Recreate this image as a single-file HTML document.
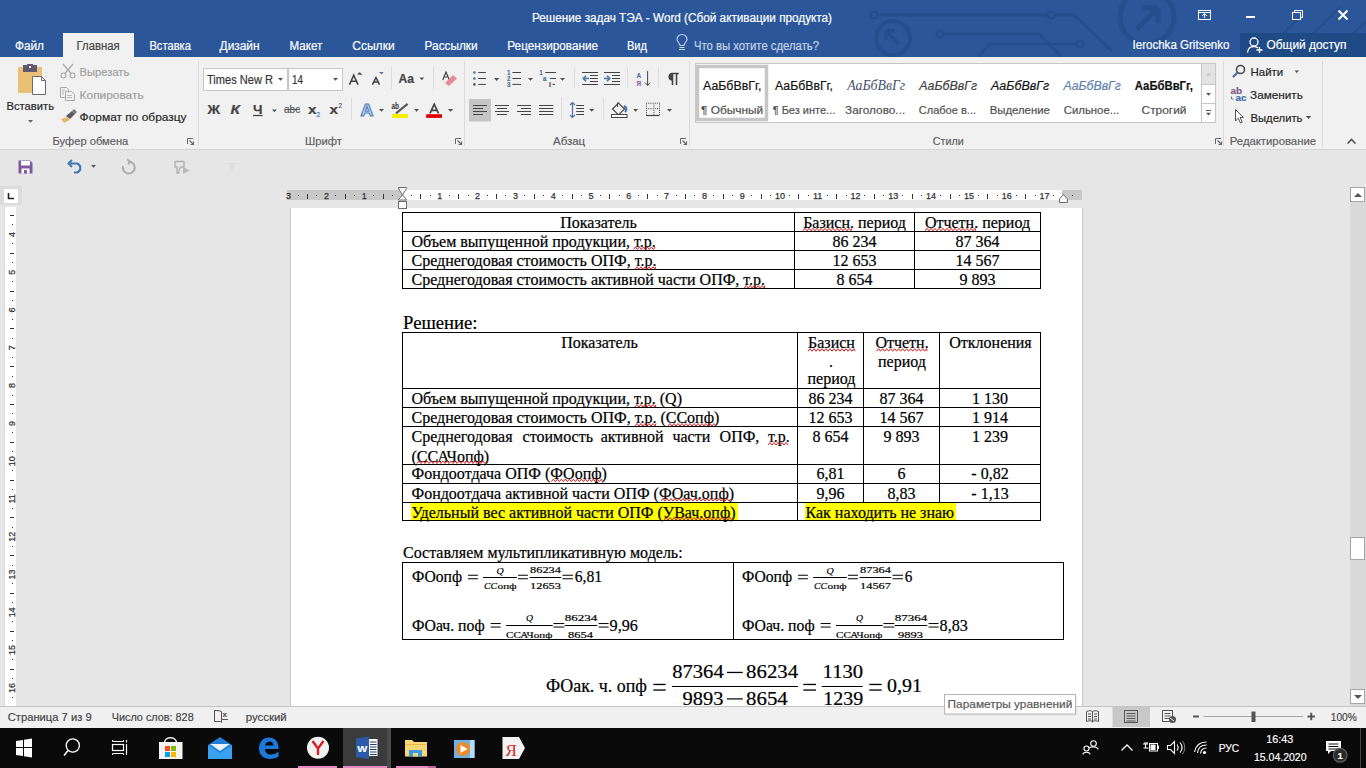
<!DOCTYPE html>
<html><head><meta charset="utf-8"><title>Word</title><style>html,body{margin:0;padding:0;width:1366px;height:768px;overflow:hidden;background:#e6e6e6}text{white-space:pre}</style></head><body><svg width="1366" height="768" viewBox="0 0 1366 768" style="position:absolute;left:0;top:0"><rect x="0" y="0" width="1366" height="57" fill="#2b579a" />
<clipPath id="tc"><rect x="0" y="0" width="1366" height="57"/></clipPath>
<g stroke="#244f8e" stroke-width="3" fill="none" clip-path="url(#tc)">
<path d="M874 15 H1051 L1074 15 L1112 51" fill="none" stroke="#244f8e" stroke-width="3" />
<circle cx="874" cy="15" r="3.5" fill="#2b579a" stroke="#244f8e" stroke-width="2.5" />
<circle cx="1051" cy="15" r="3.5" fill="#2b579a" stroke="#244f8e" stroke-width="2.5" />
<path d="M940 34 H1039 L1062 57" fill="none" stroke="#244f8e" stroke-width="3" />
<circle cx="940" cy="34" r="3.5" fill="#2b579a" stroke="#244f8e" stroke-width="2.5" />
<path d="M978 57 L990 44 H1076" fill="none" stroke="#244f8e" stroke-width="3" />
<circle cx="1080" cy="44" r="3.5" fill="#2b579a" stroke="#244f8e" stroke-width="2.5" />
<circle cx="893" cy="38" r="17" fill="none" stroke="#244f8e" stroke-width="4" />
<path d="M886 31 L899 44 M886 31 V40 M886 31 H895" fill="none" stroke="#244f8e" stroke-width="4" />
<circle cx="1147" cy="17" r="27" fill="none" stroke="#244f8e" stroke-width="5" />
<path d="M1137 29 L1158 8 M1158 8 H1143 M1158 8 V23" fill="none" stroke="#244f8e" stroke-width="5" />
<path d="M1260 57 L1300 17 M1290 57 L1340 7 M1330 57 L1366 21" fill="none" stroke="#244f8e" stroke-width="2" />
</g>
<text x="532" y="21.5" font-family="Liberation Sans" font-size="12" fill="#fff" textLength="300" lengthAdjust="spacingAndGlyphs"  stroke="#fff" stroke-width="0.18">Решение задач ТЭА - Word (Сбой активации продукта)</text>
<rect x="1198.5" y="10.5" width="12" height="9" fill="none" stroke="#fff" stroke-width="1" />
<line x1="1198" y1="12.5" x2="1211" y2="12.5" stroke="#fff" stroke-width="1" />
<path d="M1204.5 18 V14 M1202 16 L1204.5 13.5 L1207 16" fill="none" stroke="#fff" stroke-width="1" />
<line x1="1246" y1="17" x2="1255" y2="17" stroke="#fff" stroke-width="2" />
<rect x="1292.5" y="12.5" width="8" height="7" fill="none" stroke="#fff" stroke-width="1" />
<path d="M1294.5 12.5 V10.5 H1302.5 V17.5 H1300.5" fill="none" stroke="#fff" stroke-width="1" />
<path d="M1338.5 10.5 L1347.5 19.5 M1347.5 10.5 L1338.5 19.5" fill="none" stroke="#fff" stroke-width="2" />
<rect x="63" y="33" width="71" height="24" fill="#f1f1f1" />
<text x="15" y="49.5" font-family="Liberation Sans" font-size="12" fill="#fff" textLength="29" lengthAdjust="spacingAndGlyphs"  stroke="#fff" stroke-width="0.18">Файл</text>
<text x="76.5" y="49.5" font-family="Liberation Sans" font-size="12" fill="#444" textLength="43.2" lengthAdjust="spacingAndGlyphs"  stroke="#444" stroke-width="0.18">Главная</text>
<text x="149.4" y="49.5" font-family="Liberation Sans" font-size="12" fill="#fff" textLength="41.6" lengthAdjust="spacingAndGlyphs"  stroke="#fff" stroke-width="0.18">Вставка</text>
<text x="219.6" y="49.5" font-family="Liberation Sans" font-size="12" fill="#fff" textLength="40.0" lengthAdjust="spacingAndGlyphs"  stroke="#fff" stroke-width="0.18">Дизайн</text>
<text x="289.5" y="49.5" font-family="Liberation Sans" font-size="12" fill="#fff" textLength="32.8" lengthAdjust="spacingAndGlyphs"  stroke="#fff" stroke-width="0.18">Макет</text>
<text x="352.3" y="49.5" font-family="Liberation Sans" font-size="12" fill="#fff" textLength="42.3" lengthAdjust="spacingAndGlyphs"  stroke="#fff" stroke-width="0.18">Ссылки</text>
<text x="424.6" y="49.5" font-family="Liberation Sans" font-size="12" fill="#fff" textLength="53.0" lengthAdjust="spacingAndGlyphs"  stroke="#fff" stroke-width="0.18">Рассылки</text>
<text x="507.3" y="49.5" font-family="Liberation Sans" font-size="12" fill="#fff" textLength="90.7" lengthAdjust="spacingAndGlyphs"  stroke="#fff" stroke-width="0.18">Рецензирование</text>
<text x="627" y="49.5" font-family="Liberation Sans" font-size="12" fill="#fff" textLength="20" lengthAdjust="spacingAndGlyphs"  stroke="#fff" stroke-width="0.18">Вид</text>
<path d="M679 49.5 H685 M679.5 47.5 H684.5 M680 45.5 C 680 43, 677 42, 677 39.5 A 5 5 0 0 1 687 39.5 C 687 42, 684 43, 684 45.5 Z" fill="none" stroke="#c8d6ec" stroke-width="1.1" />
<text x="694" y="49.5" font-family="Liberation Sans" font-size="12" fill="#c5d2e6" textLength="125" lengthAdjust="spacingAndGlyphs"  stroke="#c5d2e6" stroke-width="0.18">Что вы хотите сделать?</text>
<text x="1132.5" y="49" font-family="Liberation Sans" font-size="12" fill="#fff" textLength="97" lengthAdjust="spacingAndGlyphs"  stroke="#fff" stroke-width="0.18">Ierochka Gritsenko</text>
<rect x="1240" y="33" width="126" height="24" fill="#1e4a86" />
<circle cx="1254" cy="42" r="4" fill="none" stroke="#fff" stroke-width="1.3" />
<path d="M1247.5 52.5 C 1248 47.5, 1251 46.5, 1254 46.5 C 1255.5 46.5, 1257 47, 1258 48" fill="none" stroke="#fff" stroke-width="1.3" />
<path d="M1259.5 47 V53 M1256.5 50 H1262.5" fill="none" stroke="#fff" stroke-width="1.3" />
<text x="1266.5" y="49" font-family="Liberation Sans" font-size="12" fill="#fff" textLength="80" lengthAdjust="spacingAndGlyphs"  stroke="#fff" stroke-width="0.18">Общий доступ</text>
<rect x="0" y="57" width="1366" height="92" fill="#f1f1f1" />
<line x1="0" y1="149.5" x2="1366" y2="149.5" stroke="#d5d5d5" stroke-width="1" />
<line x1="198.5" y1="61" x2="198.5" y2="146" stroke="#dadada" stroke-width="1" />
<line x1="464.5" y1="61" x2="464.5" y2="146" stroke="#dadada" stroke-width="1" />
<line x1="689.5" y1="61" x2="689.5" y2="146" stroke="#dadada" stroke-width="1" />
<line x1="1223.5" y1="61" x2="1223.5" y2="146" stroke="#dadada" stroke-width="1" />
<line x1="1322.5" y1="61" x2="1322.5" y2="146" stroke="#dadada" stroke-width="1" />
<text x="52.5" y="144.5" font-family="Liberation Sans" font-size="11.5" fill="#5e5e5e" textLength="75.8" lengthAdjust="spacingAndGlyphs"  stroke="#5e5e5e" stroke-width="0.18">Буфер обмена</text>
<text x="305" y="144.5" font-family="Liberation Sans" font-size="11.5" fill="#5e5e5e" textLength="37" lengthAdjust="spacingAndGlyphs"  stroke="#5e5e5e" stroke-width="0.18">Шрифт</text>
<text x="553" y="144.5" font-family="Liberation Sans" font-size="11.5" fill="#5e5e5e" textLength="32.2" lengthAdjust="spacingAndGlyphs"  stroke="#5e5e5e" stroke-width="0.18">Абзац</text>
<text x="932.7" y="144.5" font-family="Liberation Sans" font-size="11.5" fill="#5e5e5e" textLength="31" lengthAdjust="spacingAndGlyphs"  stroke="#5e5e5e" stroke-width="0.18">Стили</text>
<text x="1229.8" y="144.5" font-family="Liberation Sans" font-size="11.5" fill="#5e5e5e" textLength="86.2" lengthAdjust="spacingAndGlyphs"  stroke="#5e5e5e" stroke-width="0.18">Редактирование</text>
<path d="M187.5 144 V138.5 H193" fill="none" stroke="#6a6a6a" stroke-width="1" />
<path d="M189.5 140.5 L193 144 M190.5 144.5 H193.5 V141.5" fill="none" stroke="#6a6a6a" stroke-width="1.2" />
<path d="M455.5 144 V138.5 H461" fill="none" stroke="#6a6a6a" stroke-width="1" />
<path d="M457.5 140.5 L461 144 M458.5 144.5 H461.5 V141.5" fill="none" stroke="#6a6a6a" stroke-width="1.2" />
<path d="M680.5 144 V138.5 H686" fill="none" stroke="#6a6a6a" stroke-width="1" />
<path d="M682.5 140.5 L686 144 M683.5 144.5 H686.5 V141.5" fill="none" stroke="#6a6a6a" stroke-width="1.2" />
<path d="M1215.5 144 V138.5 H1221" fill="none" stroke="#6a6a6a" stroke-width="1" />
<path d="M1217.5 140.5 L1221 144 M1218.5 144.5 H1221.5 V141.5" fill="none" stroke="#6a6a6a" stroke-width="1.2" />
<path d="M1347.5 143.5 L1351.5 139.5 L1355.5 143.5" fill="none" stroke="#555" stroke-width="1.6" />
<rect x="18" y="67" width="24" height="26" fill="#eac077" />
<rect x="23" y="65" width="14" height="7" fill="#5f5a6e" />
<rect x="27" y="64" width="6" height="3" fill="#5f5a6e" />
<rect x="29" y="66" width="2" height="2" fill="#f1f1f1" />
<path d="M32.5 76.5 H41.5 L45.5 80.5 V94.5 H32.5 Z" fill="#fff" stroke="#6a6a6a" stroke-width="1" />
<path d="M41.5 76.5 V80.5 H45.5" fill="none" stroke="#6a6a6a" stroke-width="1" />
<text x="6.5" y="109.5" font-family="Liberation Sans" font-size="11.5" fill="#262626" textLength="47.5" lengthAdjust="spacingAndGlyphs"  stroke="#262626" stroke-width="0.18">Вставить</text>
<path d="M28 120 H33 L30.5 122.75 Z" fill="#606060" />
<path d="M63 64 L71.5 74 M73 64 L64.5 74" fill="none" stroke="#a8a8a8" stroke-width="1.2" />
<circle cx="63.5" cy="75.5" r="2.5" fill="none" stroke="#a8a8a8" stroke-width="1.1" />
<circle cx="72.5" cy="75.5" r="2.5" fill="none" stroke="#a8a8a8" stroke-width="1.1" />
<text x="79.6" y="76" font-family="Liberation Sans" font-size="11.5" fill="#a0a0a0" textLength="49.7" lengthAdjust="spacingAndGlyphs"  stroke="#a0a0a0" stroke-width="0.18">Вырезать</text>
<path d="M60.5 87.5 H66.5 L68.5 89.5 V97.5 H60.5 Z" fill="none" stroke="#a8a8a8" stroke-width="1" />
<path d="M65.5 91.5 H71.5 L74.5 94.5 V100.5 H65.5 Z" fill="#f1f1f1" stroke="#a8a8a8" stroke-width="1" />
<path d="M62 90 H65 M62 92 H64 M62 94 H64 M67 95.5 H72 M67 97.5 H72" fill="none" stroke="#a8a8a8" stroke-width="0.8" />
<text x="79.6" y="98.7" font-family="Liberation Sans" font-size="11.5" fill="#a0a0a0" textLength="64" lengthAdjust="spacingAndGlyphs"  stroke="#a0a0a0" stroke-width="0.18">Копировать</text>
<path d="M67 117 L61 119 L64 123 L70 120 Z" fill="#e0bd6e" />
<path d="M66 116 L72 111 L75 114 L70 119 Z" fill="#5a5a5a" />
<path d="M72 111 L74 109 L77 112 L75 114 Z" fill="#7a7a7a" />
<text x="79.6" y="121" font-family="Liberation Sans" font-size="11.5" fill="#262626" textLength="107" lengthAdjust="spacingAndGlyphs"  stroke="#262626" stroke-width="0.18">Формат по образцу</text>
<rect x="203.5" y="68.5" width="139" height="22" fill="#fff" stroke="#c6c6c6" stroke-width="1" />
<line x1="288" y1="69" x2="288" y2="90" stroke="#c6c6c6" stroke-width="2" />
<text x="207" y="83.6" font-family="Liberation Sans" font-size="12" fill="#333" textLength="66" lengthAdjust="spacingAndGlyphs"  stroke="#333" stroke-width="0.18">Times New R</text>
<rect x="274" y="70" width="12" height="19" fill="#fff" />
<path d="M278 78 H283 L280.5 80.75 Z" fill="#505050" />
<text x="292" y="83.6" font-family="Liberation Sans" font-size="12" fill="#333" textLength="11" lengthAdjust="spacingAndGlyphs"  stroke="#333" stroke-width="0.18">14</text>
<path d="M333 78 H338 L335.5 80.75 Z" fill="#505050" />
<path d="M349.5 84.7 L353.7 75.2 L358 84.7 M351.2 81.3 H356.3" fill="none" stroke="#444444" stroke-width="1.6" />
<path d="M357 74.8 L359.7 71.9 L362.4 74.8 Z" fill="#505050" />
<path d="M372.4 84.7 L376 77.6 L379.5 84.7 M373.8 82 H378.2" fill="none" stroke="#444444" stroke-width="1.5" />
<path d="M379 72 L381.4 74.3 L383.8 72 Z" fill="#4d6e95" />
<line x1="391.5" y1="67" x2="391.5" y2="89.5" stroke="#dcdcdc" stroke-width="1" />
<text x="398.5" y="83" font-family="Liberation Sans" font-size="13" fill="#444444" textLength="15.5" lengthAdjust="spacingAndGlyphs" font-weight="bold"  stroke="#444444" stroke-width="0.18">Aa</text>
<path d="M419.5 77.6 H424.2 L421.85 80.18499999999999 Z" fill="#505050" />
<line x1="433.5" y1="67" x2="433.5" y2="89.5" stroke="#dcdcdc" stroke-width="1" />
<path d="M442.8 80 L446 72 L449.4 80 M444 77 H448" fill="none" stroke="#444444" stroke-width="1.2" />
<path d="M445 83 L453 75 L457 78.5 L449 86 Z" fill="#e58b9b" />
<path d="M445 83 L449 86.5" fill="none" stroke="#f3c6cf" stroke-width="1" />
<text x="207.5" y="113.8" font-family="Liberation Sans" font-size="13" fill="#444444" textLength="12.5" lengthAdjust="spacingAndGlyphs" font-weight="bold"  stroke="#444444" stroke-width="0.18">Ж</text>
<text x="230.5" y="113.8" font-family="Liberation Sans" font-size="13" fill="#444444" textLength="9.5" lengthAdjust="spacingAndGlyphs" font-weight="bold" font-style="italic"  stroke="#444444" stroke-width="0.18">К</text>
<text x="253" y="113.8" font-family="Liberation Sans" font-size="13" fill="#444444" textLength="9.5" lengthAdjust="spacingAndGlyphs" font-weight="bold"  stroke="#444444" stroke-width="0.18">Ч</text>
<line x1="253" y1="115.5" x2="262.5" y2="115.5" stroke="#444444" stroke-width="1.3" />
<path d="M272 109.5 H276.8 L274.4 112.14 Z" fill="#505050" />
<text x="284" y="113" font-family="Liberation Sans" font-size="11" fill="#5a5a5a" textLength="16.2" lengthAdjust="spacingAndGlyphs"  stroke="#5a5a5a" stroke-width="0.18">abc</text>
<line x1="284.5" y1="109.5" x2="300" y2="109.5" stroke="#5a5a5a" stroke-width="1" />
<text x="308" y="113.8" font-family="Liberation Sans" font-size="13" fill="#444444" textLength="8.5" lengthAdjust="spacingAndGlyphs" font-weight="bold"  stroke="#444444" stroke-width="0.18">x</text>
<text x="316.5" y="117" font-family="Liberation Sans" font-size="6.5" fill="#3c78b4" textLength="3.5" lengthAdjust="spacingAndGlyphs"  stroke="#3c78b4" stroke-width="0.18">2</text>
<text x="329.5" y="113.8" font-family="Liberation Sans" font-size="13" fill="#444444" textLength="8.5" lengthAdjust="spacingAndGlyphs" font-weight="bold"  stroke="#444444" stroke-width="0.18">x</text>
<text x="338.5" y="107.5" font-family="Liberation Sans" font-size="6.5" fill="#555" textLength="3.5" lengthAdjust="spacingAndGlyphs"  stroke="#555" stroke-width="0.18">2</text>
<line x1="351.5" y1="98" x2="351.5" y2="120.5" stroke="#dcdcdc" stroke-width="1" />
<text x="360.5" y="115.5" font-family="Liberation Sans" font-size="16" fill="#dce8f6" textLength="12.8" lengthAdjust="spacingAndGlyphs" font-weight="bold" stroke="#4f80bd" stroke-width="1.1">A</text>
<path d="M379 109 H384 L381.5 111.75 Z" fill="#505050" />
<text x="391.5" y="108.6" font-family="Liberation Sans" font-size="8.5" fill="#444444" textLength="7.5" lengthAdjust="spacingAndGlyphs" font-weight="bold"  stroke="#444444" stroke-width="0.18">ab</text>
<path d="M396 113.3 L407.6 103.8" fill="none" stroke="#5a5a5a" stroke-width="2.2" />
<rect x="392" y="114" width="16" height="4" fill="#f0f000" />
<path d="M414.2 109 H419.0 L416.59999999999997 111.64 Z" fill="#505050" />
<path d="M430 113.3 L434.2 104.2 L438.5 113.3 M431.5 110.3 H437" fill="none" stroke="#444444" stroke-width="1.7" />
<rect x="426.2" y="114.2" width="15.8" height="3.7" fill="#e00000" />
<path d="M448 109 H453.2 L450.6 111.86 Z" fill="#505050" />
<circle cx="474.4" cy="72.5" r="1.3" fill="#50739a" />
<line x1="478.3" y1="72.5" x2="485.9" y2="72.5" stroke="#444444" stroke-width="1" />
<circle cx="509" cy="72.5" r="0" fill="none" />
<circle cx="474.4" cy="78.5" r="1.3" fill="#50739a" />
<line x1="478.3" y1="78.5" x2="485.9" y2="78.5" stroke="#444444" stroke-width="1" />
<circle cx="509" cy="78.5" r="0" fill="none" />
<circle cx="474.4" cy="84.4" r="1.3" fill="#555" />
<line x1="478.3" y1="84.4" x2="485.9" y2="84.4" stroke="#444444" stroke-width="1" />
<circle cx="509" cy="84.4" r="0" fill="none" />
<path d="M494 78 H499.3 L496.65 80.915 Z" fill="#505050" />
<text x="507" y="75.0" font-family="Liberation Sans" font-size="6.5" fill="#50739a" textLength="3.5" lengthAdjust="spacingAndGlyphs" font-weight="bold"  stroke="#50739a" stroke-width="0.18">1</text>
<line x1="512.4" y1="72.5" x2="521" y2="72.5" stroke="#444444" stroke-width="1" />
<text x="507" y="81.0" font-family="Liberation Sans" font-size="6.5" fill="#50739a" textLength="3.5" lengthAdjust="spacingAndGlyphs" font-weight="bold"  stroke="#50739a" stroke-width="0.18">2</text>
<line x1="512.4" y1="78.5" x2="521" y2="78.5" stroke="#444444" stroke-width="1" />
<text x="507" y="86.9" font-family="Liberation Sans" font-size="6.5" fill="#50739a" textLength="3.5" lengthAdjust="spacingAndGlyphs" font-weight="bold"  stroke="#50739a" stroke-width="0.18">3</text>
<line x1="512.4" y1="84.4" x2="521" y2="84.4" stroke="#444444" stroke-width="1" />
<path d="M528 78 H533 L530.5 80.75 Z" fill="#505050" />
<text x="539.5" y="75" font-family="Liberation Sans" font-size="6.5" fill="#50739a" textLength="3.2" lengthAdjust="spacingAndGlyphs" font-weight="bold"  stroke="#50739a" stroke-width="0.18">1</text>
<line x1="545.3" y1="72.5" x2="556" y2="72.5" stroke="#444444" stroke-width="1" />
<text x="543" y="81" font-family="Liberation Sans" font-size="6.5" fill="#50739a" textLength="3.5" lengthAdjust="spacingAndGlyphs" font-weight="bold"  stroke="#50739a" stroke-width="0.18">a</text>
<line x1="550" y1="78.5" x2="556" y2="78.5" stroke="#444444" stroke-width="1" />
<text x="549" y="87" font-family="Liberation Sans" font-size="6.5" fill="#444444" textLength="2" lengthAdjust="spacingAndGlyphs" font-weight="bold"  stroke="#444444" stroke-width="0.18">i</text>
<line x1="552.5" y1="84.4" x2="555" y2="84.4" stroke="#444444" stroke-width="1" />
<path d="M560 78 H565 L562.5 80.75 Z" fill="#505050" />
<line x1="574.5" y1="67.5" x2="574.5" y2="88.5" stroke="#dcdcdc" stroke-width="1" />
<line x1="582" y1="72.5" x2="598" y2="72.5" stroke="#444444" stroke-width="1" />
<line x1="582" y1="84.5" x2="598" y2="84.5" stroke="#444444" stroke-width="1" />
<line x1="590" y1="75.5" x2="598" y2="75.5" stroke="#444444" stroke-width="1" />
<line x1="590" y1="78.5" x2="598" y2="78.5" stroke="#444444" stroke-width="1" />
<line x1="590" y1="81.5" x2="598" y2="81.5" stroke="#444444" stroke-width="1" />
<path d="M589 78.5 H583.5 M586 75.8 L583.3 78.5 L586 81.2" fill="none" stroke="#4a76a8" stroke-width="1.6" />
<line x1="604" y1="72.5" x2="620" y2="72.5" stroke="#444444" stroke-width="1" />
<line x1="604" y1="84.5" x2="620" y2="84.5" stroke="#444444" stroke-width="1" />
<line x1="612" y1="75.5" x2="620" y2="75.5" stroke="#444444" stroke-width="1" />
<line x1="612" y1="78.5" x2="620" y2="78.5" stroke="#444444" stroke-width="1" />
<line x1="612" y1="81.5" x2="620" y2="81.5" stroke="#444444" stroke-width="1" />
<path d="M604 78.5 H609.5 M607 75.8 L609.7 78.5 L607 81.2" fill="none" stroke="#4a76a8" stroke-width="1.6" />
<line x1="627.5" y1="67.5" x2="627.5" y2="88.5" stroke="#dcdcdc" stroke-width="1" />
<text x="636.5" y="77.5" font-family="Liberation Sans" font-size="8" fill="#4a76a8" textLength="4.6" lengthAdjust="spacingAndGlyphs" font-weight="bold"  stroke="#4a76a8" stroke-width="0.18">A</text>
<text x="636.5" y="85.8" font-family="Liberation Sans" font-size="8" fill="#9060a8" textLength="4.6" lengthAdjust="spacingAndGlyphs" font-weight="bold"  stroke="#9060a8" stroke-width="0.18">Я</text>
<path d="M647.6 71 V85.5 M645 82.5 L647.6 85.5 L650.2 82.5" fill="none" stroke="#444444" stroke-width="1" />
<line x1="658.5" y1="67.5" x2="658.5" y2="88.5" stroke="#dcdcdc" stroke-width="1" />
<path d="M672.5 85 V73.5 M676.5 85 V73.5 M678.8 73.5 H672 A 3.3 3.3 0 0 0 672 80 H672.5" fill="none" stroke="#444444" stroke-width="1.6" />
<path d="M672 73.5 A 3.2 3.2 0 0 0 672 80 Z" fill="#444444" />
<rect x="469" y="99" width="22" height="22.5" fill="#c5c5c5" />
<line x1="473" y1="105.5" x2="487" y2="105.5" stroke="#444444" stroke-width="1" />
<line x1="495" y1="105.5" x2="509" y2="105.5" stroke="#444444" stroke-width="1" />
<line x1="517" y1="105.5" x2="531" y2="105.5" stroke="#444444" stroke-width="1" />
<line x1="539" y1="105.5" x2="553.3" y2="105.5" stroke="#444444" stroke-width="1" />
<line x1="473" y1="108.5" x2="483" y2="108.5" stroke="#444444" stroke-width="1" />
<line x1="497" y1="108.5" x2="507" y2="108.5" stroke="#444444" stroke-width="1" />
<line x1="521" y1="108.5" x2="531" y2="108.5" stroke="#444444" stroke-width="1" />
<line x1="539" y1="108.5" x2="553.3" y2="108.5" stroke="#444444" stroke-width="1" />
<line x1="473" y1="111.5" x2="487" y2="111.5" stroke="#444444" stroke-width="1" />
<line x1="495" y1="111.5" x2="509" y2="111.5" stroke="#444444" stroke-width="1" />
<line x1="517" y1="111.5" x2="531" y2="111.5" stroke="#444444" stroke-width="1" />
<line x1="539" y1="111.5" x2="553.3" y2="111.5" stroke="#444444" stroke-width="1" />
<line x1="473" y1="114.5" x2="483" y2="114.5" stroke="#444444" stroke-width="1" />
<line x1="497" y1="114.5" x2="507" y2="114.5" stroke="#444444" stroke-width="1" />
<line x1="521" y1="114.5" x2="531" y2="114.5" stroke="#444444" stroke-width="1" />
<line x1="539" y1="114.5" x2="553.3" y2="114.5" stroke="#444444" stroke-width="1" />
<line x1="561.5" y1="97" x2="561.5" y2="119.6" stroke="#dcdcdc" stroke-width="1" />
<path d="M572.5 102.5 V117.5 M570 105 L572.5 102.5 L575 105 M570 115 L572.5 117.5 L575 115" fill="none" stroke="#4a76a8" stroke-width="1.2" />
<line x1="576.2" y1="105.5" x2="584" y2="105.5" stroke="#444444" stroke-width="1" />
<line x1="576.2" y1="108.5" x2="584" y2="108.5" stroke="#444444" stroke-width="1" />
<line x1="576.2" y1="111.5" x2="584" y2="111.5" stroke="#444444" stroke-width="1" />
<line x1="576.2" y1="114.5" x2="584" y2="114.5" stroke="#444444" stroke-width="1" />
<path d="M589.2 109 H594.2 L591.7 111.75 Z" fill="#505050" />
<line x1="603.5" y1="98.6" x2="603.5" y2="119.6" stroke="#dcdcdc" stroke-width="1" />
<path d="M612.5 109 L618.5 103 L624.5 109 L618.5 115 Z" fill="none" stroke="#444444" stroke-width="1.1" />
<path d="M617.5 102.5 V107" fill="none" stroke="#444444" stroke-width="1" />
<path d="M624 106 C 627 108, 627 110, 625 112" fill="none" stroke="#3c78b4" stroke-width="2.2" />
<rect x="611.5" y="114.5" width="15.5" height="3" fill="#fff" stroke="#444444" stroke-width="1" />
<path d="M633.1 109 H638.2 L635.65 111.805 Z" fill="#505050" />
<g fill="#555">
<rect x="646.0" y="102.7" width="1" height="1"/>
<rect x="646.0" y="104.5" width="1" height="1"/>
<rect x="646.0" y="106.4" width="1" height="1"/>
<rect x="646.0" y="108.2" width="1" height="1"/>
<rect x="646.0" y="110.1" width="1" height="1"/>
<rect x="646.0" y="112.0" width="1" height="1"/>
<rect x="646.0" y="113.8" width="1" height="1"/>
<rect x="647.9" y="102.7" width="1" height="1"/>
<rect x="647.9" y="108.2" width="1" height="1"/>
<rect x="649.7" y="102.7" width="1" height="1"/>
<rect x="649.7" y="108.2" width="1" height="1"/>
<rect x="651.5" y="102.7" width="1" height="1"/>
<rect x="651.5" y="108.2" width="1" height="1"/>
<rect x="653.4" y="102.7" width="1" height="1"/>
<rect x="653.4" y="104.5" width="1" height="1"/>
<rect x="653.4" y="106.4" width="1" height="1"/>
<rect x="653.4" y="108.2" width="1" height="1"/>
<rect x="653.4" y="110.1" width="1" height="1"/>
<rect x="653.4" y="112.0" width="1" height="1"/>
<rect x="653.4" y="113.8" width="1" height="1"/>
<rect x="655.2" y="102.7" width="1" height="1"/>
<rect x="655.2" y="108.2" width="1" height="1"/>
<rect x="657.1" y="102.7" width="1" height="1"/>
<rect x="657.1" y="108.2" width="1" height="1"/>
<rect x="659.0" y="102.7" width="1" height="1"/>
<rect x="659.0" y="104.5" width="1" height="1"/>
<rect x="659.0" y="106.4" width="1" height="1"/>
<rect x="659.0" y="108.2" width="1" height="1"/>
<rect x="659.0" y="110.1" width="1" height="1"/>
<rect x="659.0" y="112.0" width="1" height="1"/>
<rect x="659.0" y="113.8" width="1" height="1"/>
</g>
<line x1="646" y1="115.5" x2="659.5" y2="115.5" stroke="#444444" stroke-width="1.2" />
<path d="M667 109 H672 L669.5 111.75 Z" fill="#505050" />
<rect x="695.5" y="63.5" width="520" height="59" fill="#fff" stroke="#c6c6c6" stroke-width="1" />
<rect x="697.5" y="66.5" width="69" height="53" fill="none" stroke="#c6c6c6" stroke-width="3.5" />
<rect x="1201.5" y="63.5" width="14" height="59" fill="#fff" stroke="#c6c6c6" stroke-width="1" />
<rect x="1202" y="64" width="13" height="20.5" fill="#e3e3e3" />
<line x1="1201.5" y1="84.5" x2="1215.5" y2="84.5" stroke="#c6c6c6" stroke-width="1" />
<line x1="1201.5" y1="103.5" x2="1215.5" y2="103.5" stroke="#c6c6c6" stroke-width="1" />
<path d="M1206 75.5 L1208.5 73 L1211 75.5 Z" fill="#c0c0c0" />
<path d="M1206 93 H1211 L1208.5 95.75 Z" fill="#555" />
<line x1="1206" y1="110.5" x2="1211" y2="110.5" stroke="#555" stroke-width="1" />
<path d="M1206 112.8 H1211 L1208.5 115.55 Z" fill="#555" />
<text x="703" y="90" font-family="Liberation Sans" font-size="12" fill="#111" textLength="58.4" lengthAdjust="spacingAndGlyphs"  stroke="#111" stroke-width="0.18">АаБбВвГг,</text>
<text x="701" y="113.8" font-family="Liberation Sans" font-size="11.5" fill="#505050" textLength="62.2" lengthAdjust="spacingAndGlyphs"  stroke="#505050" stroke-width="0.18">¶ Обычный</text>
<text x="775" y="90" font-family="Liberation Sans" font-size="12" fill="#111" textLength="58" lengthAdjust="spacingAndGlyphs"  stroke="#111" stroke-width="0.18">АаБбВвГг,</text>
<text x="772.7" y="113.8" font-family="Liberation Sans" font-size="11.5" fill="#505050" textLength="62.6" lengthAdjust="spacingAndGlyphs"  stroke="#505050" stroke-width="0.18">¶ Без инте...</text>
<text x="847.3" y="90" font-family="Liberation Serif" font-size="14" fill="#44546a" textLength="57.9" lengthAdjust="spacingAndGlyphs" font-style="italic" >АаБбВвГг</text>
<text x="845.1" y="113.8" font-family="Liberation Sans" font-size="11.5" fill="#505050" textLength="60.1" lengthAdjust="spacingAndGlyphs"  stroke="#505050" stroke-width="0.18">Заголово...</text>
<text x="919.3" y="90" font-family="Liberation Sans" font-size="12" fill="#404040" textLength="57.7" lengthAdjust="spacingAndGlyphs" font-style="italic"  stroke="#404040" stroke-width="0.18">АаБбВвГг</text>
<text x="918.7" y="113.8" font-family="Liberation Sans" font-size="11.5" fill="#505050" textLength="57.4" lengthAdjust="spacingAndGlyphs"  stroke="#505050" stroke-width="0.18">Слабое в...</text>
<text x="991" y="90" font-family="Liberation Sans" font-size="12" fill="#111" textLength="58.2" lengthAdjust="spacingAndGlyphs" font-style="italic"  stroke="#111" stroke-width="0.18">АаБбВвГг</text>
<text x="989.7" y="113.8" font-family="Liberation Sans" font-size="11.5" fill="#505050" textLength="60.1" lengthAdjust="spacingAndGlyphs"  stroke="#505050" stroke-width="0.18">Выделение</text>
<text x="1063.5" y="90" font-family="Liberation Sans" font-size="12" fill="#5b7fb0" textLength="57.3" lengthAdjust="spacingAndGlyphs" font-style="italic"  stroke="#5b7fb0" stroke-width="0.18">АаБбВвГг</text>
<text x="1063.7" y="113.8" font-family="Liberation Sans" font-size="11.5" fill="#505050" textLength="55.6" lengthAdjust="spacingAndGlyphs"  stroke="#505050" stroke-width="0.18">Сильное...</text>
<text x="1134.8" y="90" font-family="Liberation Sans" font-size="12" fill="#111" textLength="58.1" lengthAdjust="spacingAndGlyphs" font-weight="bold"  stroke="#111" stroke-width="0.18">АаБбВвГг,</text>
<text x="1141.6" y="113.8" font-family="Liberation Sans" font-size="11.5" fill="#505050" textLength="44.8" lengthAdjust="spacingAndGlyphs"  stroke="#505050" stroke-width="0.18">Строгий</text>
<circle cx="1240.5" cy="69.5" r="4" fill="none" stroke="#4a4a4a" stroke-width="1.6" />
<path d="M1237.5 72.5 L1233 77" fill="none" stroke="#4a76a8" stroke-width="2.4" />
<text x="1250.5" y="76" font-family="Liberation Sans" font-size="11.5" fill="#262626" textLength="32.8" lengthAdjust="spacingAndGlyphs"  stroke="#262626" stroke-width="0.18">Найти</text>
<path d="M1294.5 70.6 H1299.0 L1296.75 73.07499999999999 Z" fill="#505050" />
<text x="1230.5" y="94" font-family="Liberation Sans" font-size="9" fill="#7a5a8a" textLength="11.5" lengthAdjust="spacingAndGlyphs" font-weight="bold"  stroke="#7a5a8a" stroke-width="0.18">ab</text>
<text x="1235.5" y="100.5" font-family="Liberation Sans" font-size="9" fill="#3c6ea8" textLength="11" lengthAdjust="spacingAndGlyphs" font-weight="bold"  stroke="#3c6ea8" stroke-width="0.18">ac</text>
<path d="M1231.5 96.5 V99 L1233.5 99" fill="none" stroke="#3c6ea8" stroke-width="0.9" />
<text x="1250.1" y="98.7" font-family="Liberation Sans" font-size="11.5" fill="#262626" textLength="52.7" lengthAdjust="spacingAndGlyphs"  stroke="#262626" stroke-width="0.18">Заменить</text>
<path d="M1235.5 109.5 V121 L1238.2 118.3 L1240.5 123 L1242.3 122.2 L1240 117.5 L1243.5 117.5 Z" fill="#fff" stroke="#555" stroke-width="1" />
<text x="1250.5" y="121.5" font-family="Liberation Sans" font-size="11.5" fill="#262626" textLength="52" lengthAdjust="spacingAndGlyphs"  stroke="#262626" stroke-width="0.18">Выделить</text>
<path d="M1305.8 116 H1311.2 L1308.5 118.97 Z" fill="#505050" />
<rect x="291" y="208" width="791" height="498" fill="#fff" />
<rect x="290" y="208" width="1" height="498" fill="#c8c8c8" />
<rect x="1082" y="208" width="1" height="498" fill="#c8c8c8" />
<path d="M18.5 160.5 H30 L32.5 163 V173.5 H18.5 Z" fill="#80589f" />
<rect x="21" y="161" width="9" height="4.5" fill="#fff" />
<rect x="21.5" y="168.5" width="8" height="5" fill="#fff" />
<rect x="24" y="170" width="3" height="3.5" fill="#80589f" />
<path d="M70 163.5 H77 A 4.7 4.7 0 0 1 77 172.5 H74" fill="none" stroke="#3c78b4" stroke-width="2" />
<path d="M72 160 L68.5 163.5 L72 167" fill="none" stroke="#3c78b4" stroke-width="2" />
<path d="M91 165 H96 L93.5 167.8 Z" fill="#555" />
<path d="M129 161.5 A 6 6 0 1 1 123 166" fill="none" stroke="#ababab" stroke-width="2" />
<path d="M127 159.5 L130 161.5 L128 164.5" fill="none" stroke="#ababab" stroke-width="1.8" />
<path d="M175 161.5 H184 V167 H181 L179 170 V173 H177 V167 H175 Z" fill="none" stroke="#b0b0b0" stroke-width="1.3" />
<path d="M183 167 L189.5 170.5 L183 174 Z" fill="#b8b8b8" />
<path d="M228 164 H236 M229.5 166.5 L232 169 L234.5 166.5 Z" fill="none" stroke="#d8d8d8" stroke-width="1" />
<rect x="0" y="186" width="22" height="19" fill="#dcdcdc" />
<rect x="4" y="189" width="14" height="14" fill="#fff" />
<path d="M8.5 193 V198.5 H14" fill="none" stroke="#222" stroke-width="1.6" />
<rect x="287" y="190" width="776" height="10" fill="#fff" />
<rect x="287" y="190" width="115" height="10" fill="#c8c8c8" />
<rect x="1062" y="190" width="20" height="10" fill="#c8c8c8" />
<g fill="#333">
<text x="288.6" y="198.7" font-family="Liberation Sans" font-size="9" text-anchor="middle" stroke="#333" stroke-width="0.25">3</text>
<rect x="298" y="195" width="1" height="1"/>
<rect x="307" y="194" width="1" height="5"/>
<rect x="316" y="195" width="1" height="1"/>
<text x="326.4" y="198.7" font-family="Liberation Sans" font-size="9" text-anchor="middle" stroke="#333" stroke-width="0.25">2</text>
<rect x="335" y="195" width="1" height="1"/>
<rect x="345" y="194" width="1" height="5"/>
<rect x="354" y="195" width="1" height="1"/>
<text x="364.2" y="198.7" font-family="Liberation Sans" font-size="9" text-anchor="middle" stroke="#333" stroke-width="0.25">1</text>
<rect x="373" y="195" width="1" height="1"/>
<rect x="383" y="194" width="1" height="5"/>
<rect x="392" y="195" width="1" height="1"/>
<rect x="411" y="195" width="1" height="1"/>
<rect x="420" y="194" width="1" height="5"/>
<rect x="430" y="195" width="1" height="1"/>
<text x="439.8" y="198.7" font-family="Liberation Sans" font-size="9" text-anchor="middle" stroke="#333" stroke-width="0.25">1</text>
<rect x="449" y="195" width="1" height="1"/>
<rect x="458" y="194" width="1" height="5"/>
<rect x="468" y="195" width="1" height="1"/>
<text x="477.6" y="198.7" font-family="Liberation Sans" font-size="9" text-anchor="middle" stroke="#333" stroke-width="0.25">2</text>
<rect x="487" y="195" width="1" height="1"/>
<rect x="496" y="194" width="1" height="5"/>
<rect x="505" y="195" width="1" height="1"/>
<text x="515.4" y="198.7" font-family="Liberation Sans" font-size="9" text-anchor="middle" stroke="#333" stroke-width="0.25">3</text>
<rect x="524" y="195" width="1" height="1"/>
<rect x="534" y="194" width="1" height="5"/>
<rect x="543" y="195" width="1" height="1"/>
<text x="553.2" y="198.7" font-family="Liberation Sans" font-size="9" text-anchor="middle" stroke="#333" stroke-width="0.25">4</text>
<rect x="562" y="195" width="1" height="1"/>
<rect x="572" y="194" width="1" height="5"/>
<rect x="581" y="195" width="1" height="1"/>
<text x="591.0" y="198.7" font-family="Liberation Sans" font-size="9" text-anchor="middle" stroke="#333" stroke-width="0.25">5</text>
<rect x="600" y="195" width="1" height="1"/>
<rect x="609" y="194" width="1" height="5"/>
<rect x="619" y="195" width="1" height="1"/>
<text x="628.8" y="198.7" font-family="Liberation Sans" font-size="9" text-anchor="middle" stroke="#333" stroke-width="0.25">6</text>
<rect x="638" y="195" width="1" height="1"/>
<rect x="647" y="194" width="1" height="5"/>
<rect x="657" y="195" width="1" height="1"/>
<text x="666.6" y="198.7" font-family="Liberation Sans" font-size="9" text-anchor="middle" stroke="#333" stroke-width="0.25">7</text>
<rect x="676" y="195" width="1" height="1"/>
<rect x="685" y="194" width="1" height="5"/>
<rect x="694" y="195" width="1" height="1"/>
<text x="704.4" y="198.7" font-family="Liberation Sans" font-size="9" text-anchor="middle" stroke="#333" stroke-width="0.25">8</text>
<rect x="713" y="195" width="1" height="1"/>
<rect x="723" y="194" width="1" height="5"/>
<rect x="732" y="195" width="1" height="1"/>
<text x="742.2" y="198.7" font-family="Liberation Sans" font-size="9" text-anchor="middle" stroke="#333" stroke-width="0.25">9</text>
<rect x="751" y="195" width="1" height="1"/>
<rect x="761" y="194" width="1" height="5"/>
<rect x="770" y="195" width="1" height="1"/>
<text x="780.0" y="198.7" font-family="Liberation Sans" font-size="9" text-anchor="middle" stroke="#333" stroke-width="0.25">10</text>
<rect x="789" y="195" width="1" height="1"/>
<rect x="798" y="194" width="1" height="5"/>
<rect x="808" y="195" width="1" height="1"/>
<text x="817.7" y="198.7" font-family="Liberation Sans" font-size="9" text-anchor="middle" stroke="#333" stroke-width="0.25">11</text>
<rect x="827" y="195" width="1" height="1"/>
<rect x="836" y="194" width="1" height="5"/>
<rect x="846" y="195" width="1" height="1"/>
<text x="855.5" y="198.7" font-family="Liberation Sans" font-size="9" text-anchor="middle" stroke="#333" stroke-width="0.25">12</text>
<rect x="864" y="195" width="1" height="1"/>
<rect x="874" y="194" width="1" height="5"/>
<rect x="883" y="195" width="1" height="1"/>
<text x="893.3" y="198.7" font-family="Liberation Sans" font-size="9" text-anchor="middle" stroke="#333" stroke-width="0.25">13</text>
<rect x="902" y="195" width="1" height="1"/>
<rect x="912" y="194" width="1" height="5"/>
<rect x="921" y="195" width="1" height="1"/>
<text x="931.1" y="198.7" font-family="Liberation Sans" font-size="9" text-anchor="middle" stroke="#333" stroke-width="0.25">14</text>
<rect x="940" y="195" width="1" height="1"/>
<rect x="950" y="194" width="1" height="5"/>
<rect x="959" y="195" width="1" height="1"/>
<text x="968.9" y="198.7" font-family="Liberation Sans" font-size="9" text-anchor="middle" stroke="#333" stroke-width="0.25">15</text>
<rect x="978" y="195" width="1" height="1"/>
<rect x="987" y="194" width="1" height="5"/>
<rect x="997" y="195" width="1" height="1"/>
<text x="1006.7" y="198.7" font-family="Liberation Sans" font-size="9" text-anchor="middle" stroke="#333" stroke-width="0.25">16</text>
<rect x="1016" y="195" width="1" height="1"/>
<rect x="1025" y="194" width="1" height="5"/>
<rect x="1035" y="195" width="1" height="1"/>
<text x="1044.5" y="198.7" font-family="Liberation Sans" font-size="9" text-anchor="middle" stroke="#333" stroke-width="0.25">17</text>
<rect x="1053" y="195" width="1" height="1"/>
<rect x="1063" y="194" width="1" height="5"/>
<rect x="1072" y="195" width="1" height="1"/>
</g>
<path d="M398.5 187.5 H406.5 V188.5 L402.5 195 L406.5 199.5 V200 H398.5 V199.5 L402.5 195 L398.5 188.5 Z" fill="#fff" stroke="#6a6a6a" stroke-width="1" />
<rect x="398.5" y="201.5" width="8" height="7" fill="#fff" stroke="#6a6a6a" stroke-width="1" />
<path d="M1063.5 194.5 L1067.5 199 V202.5 H1059.5 V199 Z" fill="#fff" stroke="#6a6a6a" stroke-width="1" />
<rect x="4" y="207" width="1" height="499" fill="#dadada" />
<rect x="5" y="207" width="11" height="499" fill="#fff" />
<g fill="#333">
<rect x="10" y="215" width="4" height="1"/>
<rect x="12" y="224" width="1" height="1"/>
<text transform="translate(14.7 234.4) rotate(-90)" x="0" y="0" font-family="Liberation Sans" font-size="9" text-anchor="middle" stroke="#333" stroke-width="0.25">4</text>
<rect x="12" y="243" width="1" height="1"/>
<rect x="10" y="253" width="4" height="1"/>
<rect x="12" y="262" width="1" height="1"/>
<text transform="translate(14.7 272.2) rotate(-90)" x="0" y="0" font-family="Liberation Sans" font-size="9" text-anchor="middle" stroke="#333" stroke-width="0.25">5</text>
<rect x="12" y="281" width="1" height="1"/>
<rect x="10" y="291" width="4" height="1"/>
<rect x="12" y="300" width="1" height="1"/>
<text transform="translate(14.7 310.0) rotate(-90)" x="0" y="0" font-family="Liberation Sans" font-size="9" text-anchor="middle" stroke="#333" stroke-width="0.25">6</text>
<rect x="12" y="319" width="1" height="1"/>
<rect x="10" y="328" width="4" height="1"/>
<rect x="12" y="338" width="1" height="1"/>
<text transform="translate(14.7 347.8) rotate(-90)" x="0" y="0" font-family="Liberation Sans" font-size="9" text-anchor="middle" stroke="#333" stroke-width="0.25">7</text>
<rect x="12" y="357" width="1" height="1"/>
<rect x="10" y="366" width="4" height="1"/>
<rect x="12" y="376" width="1" height="1"/>
<text transform="translate(14.7 385.6) rotate(-90)" x="0" y="0" font-family="Liberation Sans" font-size="9" text-anchor="middle" stroke="#333" stroke-width="0.25">8</text>
<rect x="12" y="395" width="1" height="1"/>
<rect x="10" y="404" width="4" height="1"/>
<rect x="12" y="413" width="1" height="1"/>
<text transform="translate(14.7 423.4) rotate(-90)" x="0" y="0" font-family="Liberation Sans" font-size="9" text-anchor="middle" stroke="#333" stroke-width="0.25">9</text>
<rect x="12" y="432" width="1" height="1"/>
<rect x="10" y="442" width="4" height="1"/>
<rect x="12" y="451" width="1" height="1"/>
<text transform="translate(14.7 461.2) rotate(-90)" x="0" y="0" font-family="Liberation Sans" font-size="9" text-anchor="middle" stroke="#333" stroke-width="0.25">10</text>
<rect x="12" y="470" width="1" height="1"/>
<rect x="10" y="480" width="4" height="1"/>
<rect x="12" y="489" width="1" height="1"/>
<text transform="translate(14.7 498.9) rotate(-90)" x="0" y="0" font-family="Liberation Sans" font-size="9" text-anchor="middle" stroke="#333" stroke-width="0.25">11</text>
<rect x="12" y="508" width="1" height="1"/>
<rect x="10" y="517" width="4" height="1"/>
<rect x="12" y="527" width="1" height="1"/>
<text transform="translate(14.7 536.7) rotate(-90)" x="0" y="0" font-family="Liberation Sans" font-size="9" text-anchor="middle" stroke="#333" stroke-width="0.25">12</text>
<rect x="12" y="546" width="1" height="1"/>
<rect x="10" y="555" width="4" height="1"/>
<rect x="12" y="565" width="1" height="1"/>
<text transform="translate(14.7 574.5) rotate(-90)" x="0" y="0" font-family="Liberation Sans" font-size="9" text-anchor="middle" stroke="#333" stroke-width="0.25">13</text>
<rect x="12" y="583" width="1" height="1"/>
<rect x="10" y="593" width="4" height="1"/>
<rect x="12" y="602" width="1" height="1"/>
<text transform="translate(14.7 612.3) rotate(-90)" x="0" y="0" font-family="Liberation Sans" font-size="9" text-anchor="middle" stroke="#333" stroke-width="0.25">14</text>
<rect x="12" y="621" width="1" height="1"/>
<rect x="10" y="631" width="4" height="1"/>
<rect x="12" y="640" width="1" height="1"/>
<text transform="translate(14.7 650.1) rotate(-90)" x="0" y="0" font-family="Liberation Sans" font-size="9" text-anchor="middle" stroke="#333" stroke-width="0.25">15</text>
<rect x="12" y="659" width="1" height="1"/>
<rect x="10" y="669" width="4" height="1"/>
<rect x="12" y="678" width="1" height="1"/>
<text transform="translate(14.7 687.9) rotate(-90)" x="0" y="0" font-family="Liberation Sans" font-size="9" text-anchor="middle" stroke="#333" stroke-width="0.25">16</text>
<rect x="12" y="697" width="1" height="1"/>
</g>
<rect x="1350" y="187" width="16" height="519" fill="#dadada" />
<rect x="1350.5" y="187.5" width="14" height="14" fill="#fff" stroke="#a6a6a6" stroke-width="1" />
<path d="M1354 197 L1358 193 L1362 197 Z" fill="#555" />
<rect x="1350.5" y="537.5" width="14" height="22" fill="#fff" stroke="#a6a6a6" stroke-width="1" />
<rect x="1350.5" y="689.5" width="14" height="14" fill="#fff" stroke="#a6a6a6" stroke-width="1" />
<path d="M1354 695 L1358 699 L1362 695 Z" fill="#555" />
<rect x="402" y="212" width="639" height="1" fill="#000" />
<rect x="402" y="231" width="639" height="1" fill="#000" />
<rect x="402" y="250" width="639" height="1" fill="#000" />
<rect x="402" y="269" width="639" height="1" fill="#000" />
<rect x="402" y="288" width="639" height="1" fill="#000" />
<rect x="402" y="212" width="1" height="77" fill="#000" />
<rect x="794" y="212" width="1" height="77" fill="#000" />
<rect x="914" y="212" width="1" height="77" fill="#000" />
<rect x="1040" y="212" width="1" height="77" fill="#000" />
<text x="598.5" y="227.8" font-family="Liberation Serif" font-size="16" fill="#000" text-anchor="middle" stroke="#000" stroke-width="0.22">Показатель</text>
<text x="854.5" y="227.8" font-family="Liberation Serif" font-size="16" fill="#000" text-anchor="middle" stroke="#000" stroke-width="0.22">Базисн. период</text>
<text x="977.5" y="227.8" font-family="Liberation Serif" font-size="16" fill="#000" text-anchor="middle" stroke="#000" stroke-width="0.22">Отчетн. период</text>
<text x="411.5" y="247.2" font-family="Liberation Serif" font-size="16" fill="#000" stroke="#000" stroke-width="0.22">Объем выпущенной продукции, т.р.</text>
<text x="854.5" y="247.2" font-family="Liberation Serif" font-size="16" fill="#000" text-anchor="middle" stroke="#000" stroke-width="0.22">86 234</text>
<text x="977.5" y="247.2" font-family="Liberation Serif" font-size="16" fill="#000" text-anchor="middle" stroke="#000" stroke-width="0.22">87 364</text>
<text x="411.5" y="265.8" font-family="Liberation Serif" font-size="16" fill="#000" stroke="#000" stroke-width="0.22">Среднегодовая стоимость ОПФ, т.р.</text>
<text x="854.5" y="265.8" font-family="Liberation Serif" font-size="16" fill="#000" text-anchor="middle" stroke="#000" stroke-width="0.22">12 653</text>
<text x="977.5" y="265.8" font-family="Liberation Serif" font-size="16" fill="#000" text-anchor="middle" stroke="#000" stroke-width="0.22">14 567</text>
<text x="411.5" y="284.9" font-family="Liberation Serif" font-size="16" fill="#000" stroke="#000" stroke-width="0.22">Среднегодовая стоимость активной части ОПФ, т.р.</text>
<text x="854.5" y="284.9" font-family="Liberation Serif" font-size="16" fill="#000" text-anchor="middle" stroke="#000" stroke-width="0.22">8 654</text>
<text x="977.5" y="284.9" font-family="Liberation Serif" font-size="16" fill="#000" text-anchor="middle" stroke="#000" stroke-width="0.22">9 893</text>
<path d="M803 230.8 L805.0 228.3 L807.0 230.8 L809.0 228.3 L811.0 230.8 L813.0 228.3 L815.0 230.8 L817.0 228.3 L819.0 230.8 L821.0 228.3 L823.0 230.8 L825.0 228.3 L827.0 230.8 L829.0 228.3 L831.0 230.8 L833.0 228.3 L835.0 230.8 L837.0 228.3 L839.0 230.8 L841.0 228.3 L843.0 230.8 L845.0 228.3 L847.0 230.8 L849.0 228.3 L851.0 230.8 L851.6 228.3" fill="none" stroke="#d02020" stroke-width="1.0" />
<path d="M925 230.8 L927.0 228.3 L929.0 230.8 L931.0 228.3 L933.0 230.8 L935.0 228.3 L937.0 230.8 L939.0 228.3 L941.0 230.8 L943.0 228.3 L945.0 230.8 L947.0 228.3 L949.0 230.8 L951.0 228.3 L953.0 230.8 L955.0 228.3 L957.0 230.8 L959.0 228.3 L961.0 230.8 L963.0 228.3 L965.0 230.8 L967.0 228.3 L969.0 230.8 L971.0 228.3 L973.0 230.8 L975.0 228.3 L975.7 230.8" fill="none" stroke="#d02020" stroke-width="1.0" />
<path d="M633.4 249.5 L635.4 247 L637.4 249.5 L639.4 247 L641.4 249.5 L643.4 247 L645.4 249.5 L647.4 247 L649.4 249.5 L651.4 247 L653.4 249.5 L655.0 247" fill="none" stroke="#d02020" stroke-width="1.0" />
<path d="M635.1 269.3 L637.1 266.8 L639.1 269.3 L641.1 266.8 L643.1 269.3 L645.1 266.8 L647.1 269.3 L649.1 266.8 L651.1 269.3 L653.1 266.8 L655.1 269.3 L655.6 266.8" fill="none" stroke="#d02020" stroke-width="1.0" />
<path d="M744.2 288.1 L746.2 285.6 L748.2 288.1 L750.2 285.6 L752.2 288.1 L754.2 285.6 L756.2 288.1 L758.2 285.6 L760.2 288.1 L762.2 285.6 L764.2 288.1 L764.7 285.6" fill="none" stroke="#d02020" stroke-width="1.0" />
<text x="403" y="328.5" font-family="Liberation Serif" font-size="18.67" fill="#000" stroke="#000" stroke-width="0.22">Решение:</text>
<rect x="402" y="332" width="639" height="1" fill="#000" />
<rect x="402" y="388" width="639" height="1" fill="#000" />
<rect x="402" y="407" width="639" height="1" fill="#000" />
<rect x="402" y="426" width="639" height="1" fill="#000" />
<rect x="402" y="464" width="639" height="1" fill="#000" />
<rect x="402" y="483" width="639" height="1" fill="#000" />
<rect x="402" y="502" width="639" height="1" fill="#000" />
<rect x="402" y="520" width="639" height="1" fill="#000" />
<rect x="402" y="332" width="1" height="189" fill="#000" />
<rect x="1040" y="332" width="1" height="189" fill="#000" />
<rect x="797" y="332" width="1" height="189" fill="#000" />
<rect x="863" y="332" width="1" height="171" fill="#000" />
<rect x="939" y="332" width="1" height="171" fill="#000" />
<text x="599.5" y="347.6" font-family="Liberation Serif" font-size="16" fill="#000" text-anchor="middle" stroke="#000" stroke-width="0.22">Показатель</text>
<text x="831.5" y="347.9" font-family="Liberation Serif" font-size="16" fill="#000" text-anchor="middle" stroke="#000" stroke-width="0.22">Базисн</text>
<text x="831" y="366.7" font-family="Liberation Serif" font-size="16" fill="#000" text-anchor="middle" stroke="#000" stroke-width="0.22">.</text>
<text x="831.5" y="384.4" font-family="Liberation Serif" font-size="16" fill="#000" text-anchor="middle" stroke="#000" stroke-width="0.22">период</text>
<text x="902" y="347.9" font-family="Liberation Serif" font-size="16" fill="#000" text-anchor="middle" stroke="#000" stroke-width="0.22">Отчетн.</text>
<text x="902" y="366.7" font-family="Liberation Serif" font-size="16" fill="#000" text-anchor="middle" stroke="#000" stroke-width="0.22">период</text>
<text x="990.5" y="347.9" font-family="Liberation Serif" font-size="16" fill="#000" text-anchor="middle" stroke="#000" stroke-width="0.22">Отклонения</text>
<path d="M808 351.2 L810.0 348.7 L812.0 351.2 L814.0 348.7 L816.0 351.2 L818.0 348.7 L820.0 351.2 L822.0 348.7 L824.0 351.2 L826.0 348.7 L828.0 351.2 L830.0 348.7 L832.0 351.2 L834.0 348.7 L836.0 351.2 L838.0 348.7 L840.0 351.2 L842.0 348.7 L844.0 351.2 L846.0 348.7 L848.0 351.2 L850.0 348.7 L852.0 351.2 L854.0 348.7 L855.0 351.2" fill="none" stroke="#d02020" stroke-width="1.0" />
<path d="M876.6 351.2 L878.6 348.7 L880.6 351.2 L882.6 348.7 L884.6 351.2 L886.6 348.7 L888.6 351.2 L890.6 348.7 L892.6 351.2 L894.6 348.7 L896.6 351.2 L898.6 348.7 L900.6 351.2 L902.6 348.7 L904.6 351.2 L906.6 348.7 L908.6 351.2 L910.6 348.7 L912.6 351.2 L914.6 348.7 L916.6 351.2 L918.6 348.7 L920.6 351.2 L922.6 348.7 L924.6 351.2 L926.6 348.7 L927.0 351.2" fill="none" stroke="#d02020" stroke-width="1.0" />
<text x="411.5" y="404.2" font-family="Liberation Serif" font-size="16" fill="#000" stroke="#000" stroke-width="0.22">Объем выпущенной продукции, т.р. (Q)</text>
<text x="411.5" y="423.2" font-family="Liberation Serif" font-size="16" fill="#000" stroke="#000" stroke-width="0.22">Среднегодовая стоимость ОПФ, т.р. (ССопф)</text>
<text x="411.5" y="442.4" font-family="Liberation Serif" font-size="16" fill="#000" stroke="#000" stroke-width="0.22">Среднегодовая</text>
<text x="522.6" y="442.4" font-family="Liberation Serif" font-size="16" fill="#000" stroke="#000" stroke-width="0.22">стоимость</text>
<text x="600.7" y="442.4" font-family="Liberation Serif" font-size="16" fill="#000" stroke="#000" stroke-width="0.22">активной</text>
<text x="672.4" y="442.4" font-family="Liberation Serif" font-size="16" fill="#000" stroke="#000" stroke-width="0.22">части</text>
<text x="719.6" y="442.4" font-family="Liberation Serif" font-size="16" fill="#000" stroke="#000" stroke-width="0.22">ОПФ,</text>
<text x="768" y="442.4" font-family="Liberation Serif" font-size="16" fill="#000" stroke="#000" stroke-width="0.22">т.р.</text>
<text x="411.5" y="461.9" font-family="Liberation Serif" font-size="16" fill="#000" stroke="#000" stroke-width="0.22">(ССАЧопф)</text>
<text x="411.5" y="479.4" font-family="Liberation Serif" font-size="16" fill="#000" stroke="#000" stroke-width="0.22">Фондоотдача ОПФ (ФОопф)</text>
<text x="411.5" y="498.9" font-family="Liberation Serif" font-size="16" fill="#000" stroke="#000" stroke-width="0.22">Фондоотдача активной части ОПФ (ФОач.опф)</text>
<rect x="411" y="503" width="327" height="17" fill="#ffff00" />
<rect x="805" y="503" width="151" height="17" fill="#ffff00" />
<text x="411.5" y="517.5" font-family="Liberation Serif" font-size="16" fill="#000" stroke="#000" stroke-width="0.22">Удельный вес активной части ОПФ (УВач.опф)</text>
<text x="805.5" y="517.5" font-family="Liberation Serif" font-size="16" fill="#000" stroke="#000" stroke-width="0.22">Как находить не знаю</text>
<path d="M635 407.0 L637.0 404.5 L639.0 407.0 L641.0 404.5 L643.0 407.0 L645.0 404.5 L647.0 407.0 L649.0 404.5 L651.0 407.0 L653.0 404.5 L655.0 407.0 L656.0 404.5" fill="none" stroke="#d02020" stroke-width="1.0" />
<path d="M635 426.0 L637.0 423.5 L639.0 426.0 L641.0 423.5 L643.0 426.0 L645.0 423.5 L647.0 426.0 L649.0 423.5 L651.0 426.0 L653.0 423.5 L655.0 426.0 L656.0 423.5" fill="none" stroke="#d02020" stroke-width="1.0" />
<path d="M768 445.0 L770.0 442.5 L772.0 445.0 L774.0 442.5 L776.0 445.0 L778.0 442.5 L780.0 445.0 L782.0 442.5 L784.0 445.0 L786.0 442.5 L788.0 445.0" fill="none" stroke="#d02020" stroke-width="1.0" />
<path d="M668 426.0 L670.0 423.5 L672.0 426.0 L674.0 423.5 L676.0 426.0 L678.0 423.5 L680.0 426.0 L682.0 423.5 L684.0 426.0 L686.0 423.5 L688.0 426.0 L690.0 423.5 L692.0 426.0 L694.0 423.5 L696.0 426.0 L698.0 423.5 L700.0 426.0 L702.0 423.5 L704.0 426.0 L706.0 423.5 L708.0 426.0 L710.0 423.5 L712.0 426.0 L714.0 423.5 L716.0 426.0" fill="none" stroke="#d02020" stroke-width="1.0" />
<path d="M417 463.5 L419.0 461 L421.0 463.5 L423.0 461 L425.0 463.5 L427.0 461 L429.0 463.5 L431.0 461 L433.0 463.5 L435.0 461 L437.0 463.5 L439.0 461 L441.0 463.5 L443.0 461 L445.0 463.5 L447.0 461 L449.0 463.5 L451.0 461 L453.0 463.5 L455.0 461 L457.0 463.5 L459.0 461 L461.0 463.5 L463.0 461 L465.0 463.5 L467.0 461 L469.0 463.5 L471.0 461 L473.0 463.5 L475.0 461 L477.0 463.5 L479.0 461 L481.0 463.5 L483.0 461 L485.0 463.5 L487.0 461" fill="none" stroke="#d02020" stroke-width="1.0" />
<path d="M551.4 481.6 L553.4 479.1 L555.4 481.6 L557.4 479.1 L559.4 481.6 L561.4 479.1 L563.4 481.6 L565.4 479.1 L567.4 481.6 L569.4 479.1 L571.4 481.6 L573.4 479.1 L575.4 481.6 L577.4 479.1 L579.4 481.6 L581.4 479.1 L583.4 481.6 L585.4 479.1 L587.4 481.6 L589.4 479.1 L591.4 481.6 L593.4 479.1 L595.4 481.6 L597.4 479.1 L599.4 481.6 L601.4 479.1 L602.4 481.6" fill="none" stroke="#d02020" stroke-width="1.0" />
<path d="M661 501.0 L663.0 498.5 L665.0 501.0 L667.0 498.5 L669.0 501.0 L671.0 498.5 L673.0 501.0 L675.0 498.5 L677.0 501.0 L679.0 498.5 L681.0 501.0 L683.0 498.5 L685.0 501.0 L687.0 498.5 L689.0 501.0 L691.0 498.5 L693.0 501.0 L695.0 498.5 L697.0 501.0 L699.0 498.5 L701.0 501.0 L703.0 498.5 L705.0 501.0 L707.0 498.5 L709.0 501.0 L711.0 498.5 L713.0 501.0 L715.0 498.5 L717.0 501.0 L719.0 498.5 L721.0 501.0 L723.0 498.5 L725.0 501.0 L727.0 498.5 L729.0 501.0 L731.0 498.5" fill="none" stroke="#d02020" stroke-width="1.0" />
<path d="M664 520.0 L666.0 517.5 L668.0 520.0 L670.0 517.5 L672.0 520.0 L674.0 517.5 L676.0 520.0 L678.0 517.5 L680.0 520.0 L682.0 517.5 L684.0 520.0 L686.0 517.5 L688.0 520.0 L690.0 517.5 L692.0 520.0 L694.0 517.5 L696.0 520.0 L698.0 517.5 L700.0 520.0 L702.0 517.5 L704.0 520.0 L706.0 517.5 L708.0 520.0 L710.0 517.5 L712.0 520.0 L714.0 517.5 L716.0 520.0 L718.0 517.5 L720.0 520.0 L722.0 517.5 L724.0 520.0 L726.0 517.5 L728.0 520.0 L730.0 517.5 L732.0 520.0 L733.0 517.5" fill="none" stroke="#d02020" stroke-width="1.0" />
<text x="830.5" y="404.2" font-family="Liberation Serif" font-size="16" fill="#000" text-anchor="middle" stroke="#000" stroke-width="0.22">86 234</text>
<text x="901.5" y="404.2" font-family="Liberation Serif" font-size="16" fill="#000" text-anchor="middle" stroke="#000" stroke-width="0.22">87 364</text>
<text x="990" y="404.2" font-family="Liberation Serif" font-size="16" fill="#000" text-anchor="middle" stroke="#000" stroke-width="0.22">1 130</text>
<text x="830.5" y="423.2" font-family="Liberation Serif" font-size="16" fill="#000" text-anchor="middle" stroke="#000" stroke-width="0.22">12 653</text>
<text x="901.5" y="423.2" font-family="Liberation Serif" font-size="16" fill="#000" text-anchor="middle" stroke="#000" stroke-width="0.22">14 567</text>
<text x="990" y="423.2" font-family="Liberation Serif" font-size="16" fill="#000" text-anchor="middle" stroke="#000" stroke-width="0.22">1 914</text>
<text x="830.5" y="442.4" font-family="Liberation Serif" font-size="16" fill="#000" text-anchor="middle" stroke="#000" stroke-width="0.22">8 654</text>
<text x="901.5" y="442.4" font-family="Liberation Serif" font-size="16" fill="#000" text-anchor="middle" stroke="#000" stroke-width="0.22">9 893</text>
<text x="990" y="442.4" font-family="Liberation Serif" font-size="16" fill="#000" text-anchor="middle" stroke="#000" stroke-width="0.22">1 239</text>
<text x="830.5" y="479.4" font-family="Liberation Serif" font-size="16" fill="#000" text-anchor="middle" stroke="#000" stroke-width="0.22">6,81</text>
<text x="901.5" y="479.4" font-family="Liberation Serif" font-size="16" fill="#000" text-anchor="middle" stroke="#000" stroke-width="0.22">6</text>
<text x="990" y="479.4" font-family="Liberation Serif" font-size="16" fill="#000" text-anchor="middle" stroke="#000" stroke-width="0.22">- 0,82</text>
<text x="830.5" y="498.9" font-family="Liberation Serif" font-size="16" fill="#000" text-anchor="middle" stroke="#000" stroke-width="0.22">9,96</text>
<text x="901.5" y="498.9" font-family="Liberation Serif" font-size="16" fill="#000" text-anchor="middle" stroke="#000" stroke-width="0.22">8,83</text>
<text x="990" y="498.9" font-family="Liberation Serif" font-size="16" fill="#000" text-anchor="middle" stroke="#000" stroke-width="0.22">- 1,13</text>
<text x="403" y="557.7" font-family="Liberation Serif" font-size="16" fill="#000" stroke="#000" stroke-width="0.22">Составляем мультипликативную модель:</text>
<rect x="402" y="562" width="662" height="1" fill="#000" />
<rect x="402" y="639" width="662" height="1" fill="#000" />
<rect x="402" y="562" width="1" height="78" fill="#000" />
<rect x="733" y="562" width="1" height="78" fill="#000" />
<rect x="1063" y="562" width="1" height="78" fill="#000" />
<text x="412" y="582.3" font-family="Liberation Serif" font-size="16" fill="#000" textLength="50" lengthAdjust="spacingAndGlyphs" stroke="#000" stroke-width="0.22">ФОопф</text>
<rect x="467.9" y="574.75" width="10.0" height="1.0" fill="#000" />
<rect x="467.9" y="578.25" width="10.0" height="1.0" fill="#000" />
<rect x="483.1" y="577" width="33.7" height="1" fill="#000" />
<text x="496.6" y="573.5" font-family="Liberation Serif" font-size="9.2" fill="#000" textLength="7.2" lengthAdjust="spacingAndGlyphs" font-style="italic" stroke="#000" stroke-width="0.18">Q</text>
<text x="484" y="589.3" font-family="Liberation Serif" font-size="9.2" fill="#000" textLength="13" lengthAdjust="spacingAndGlyphs" font-style="italic" stroke="#000" stroke-width="0.18">CC</text>
<text x="497.5" y="589.3" font-family="Liberation Serif" font-size="9.2" fill="#000" textLength="19.0" lengthAdjust="spacingAndGlyphs" stroke="#000" stroke-width="0.18">опф</text>
<rect x="518" y="574.75" width="9.899999999999977" height="1.0" fill="#000" />
<rect x="518" y="578.25" width="9.899999999999977" height="1.0" fill="#000" />
<rect x="529.6" y="577" width="31.5" height="1" fill="#000" />
<text x="530" y="572.8" font-family="Liberation Serif" font-size="9.2" fill="#000" textLength="31" lengthAdjust="spacingAndGlyphs" stroke="#000" stroke-width="0.18">86234</text>
<text x="530" y="589.3" font-family="Liberation Serif" font-size="9.2" fill="#000" textLength="31" lengthAdjust="spacingAndGlyphs" stroke="#000" stroke-width="0.18">12653</text>
<rect x="562.5" y="574.75" width="10.5" height="1.0" fill="#000" />
<rect x="562.5" y="578.25" width="10.5" height="1.0" fill="#000" />
<text x="574.7" y="582.3" font-family="Liberation Serif" font-size="16" fill="#000" textLength="27.4" lengthAdjust="spacingAndGlyphs" stroke="#000" stroke-width="0.22">6,81</text>
<text x="411.9" y="630.5" font-family="Liberation Serif" font-size="16" fill="#000" textLength="72.7" lengthAdjust="spacingAndGlyphs" stroke="#000" stroke-width="0.22">ФОач. поф</text>
<rect x="490.6" y="623.05" width="10.099999999999966" height="1.0" fill="#000" />
<rect x="490.6" y="626.55" width="10.099999999999966" height="1.0" fill="#000" />
<rect x="506.1" y="625" width="46.7" height="1" fill="#000" />
<text x="526" y="621.3" font-family="Liberation Serif" font-size="9.2" fill="#000" textLength="7" lengthAdjust="spacingAndGlyphs" font-style="italic" stroke="#000" stroke-width="0.18">Q</text>
<text x="506.1" y="637.8" font-family="Liberation Serif" font-size="9.2" fill="#000" textLength="46.2" lengthAdjust="spacingAndGlyphs" stroke="#000" stroke-width="0.18">ССАЧопф</text>
<rect x="553.4" y="623.05" width="10.899999999999977" height="1.0" fill="#000" />
<rect x="553.4" y="626.55" width="10.899999999999977" height="1.0" fill="#000" />
<rect x="564.7" y="625" width="32.6" height="1" fill="#000" />
<text x="564.7" y="620.8" font-family="Liberation Serif" font-size="9.2" fill="#000" textLength="32.6" lengthAdjust="spacingAndGlyphs" stroke="#000" stroke-width="0.18">86234</text>
<text x="568" y="637.8" font-family="Liberation Serif" font-size="9.2" fill="#000" textLength="25" lengthAdjust="spacingAndGlyphs" stroke="#000" stroke-width="0.18">8654</text>
<rect x="598.6" y="623.05" width="10.0" height="1.0" fill="#000" />
<rect x="598.6" y="626.55" width="10.0" height="1.0" fill="#000" />
<text x="609.6" y="630.5" font-family="Liberation Serif" font-size="16" fill="#000" textLength="28.3" lengthAdjust="spacingAndGlyphs" stroke="#000" stroke-width="0.22">9,96</text>
<text x="742" y="582.3" font-family="Liberation Serif" font-size="16" fill="#000" textLength="50" lengthAdjust="spacingAndGlyphs" stroke="#000" stroke-width="0.22">ФОопф</text>
<rect x="797.9" y="574.75" width="10.0" height="1.0" fill="#000" />
<rect x="797.9" y="578.25" width="10.0" height="1.0" fill="#000" />
<rect x="813.1" y="577" width="33.7" height="1" fill="#000" />
<text x="826.6" y="573.5" font-family="Liberation Serif" font-size="9.2" fill="#000" textLength="7.2" lengthAdjust="spacingAndGlyphs" font-style="italic" stroke="#000" stroke-width="0.18">Q</text>
<text x="814" y="589.3" font-family="Liberation Serif" font-size="9.2" fill="#000" textLength="13" lengthAdjust="spacingAndGlyphs" font-style="italic" stroke="#000" stroke-width="0.18">CC</text>
<text x="827.5" y="589.3" font-family="Liberation Serif" font-size="9.2" fill="#000" textLength="19.0" lengthAdjust="spacingAndGlyphs" stroke="#000" stroke-width="0.18">опф</text>
<rect x="848" y="574.75" width="9.899999999999977" height="1.0" fill="#000" />
<rect x="848" y="578.25" width="9.899999999999977" height="1.0" fill="#000" />
<rect x="859.6" y="577" width="31.5" height="1" fill="#000" />
<text x="860" y="572.8" font-family="Liberation Serif" font-size="9.2" fill="#000" textLength="31" lengthAdjust="spacingAndGlyphs" stroke="#000" stroke-width="0.18">87364</text>
<text x="860" y="589.3" font-family="Liberation Serif" font-size="9.2" fill="#000" textLength="31" lengthAdjust="spacingAndGlyphs" stroke="#000" stroke-width="0.18">14567</text>
<rect x="892.5" y="574.75" width="10.5" height="1.0" fill="#000" />
<rect x="892.5" y="578.25" width="10.5" height="1.0" fill="#000" />
<text x="904.7" y="582.3" font-family="Liberation Serif" font-size="16" fill="#000" textLength="7.6" lengthAdjust="spacingAndGlyphs" stroke="#000" stroke-width="0.22">6</text>
<text x="741.9" y="630.5" font-family="Liberation Serif" font-size="16" fill="#000" textLength="72.7" lengthAdjust="spacingAndGlyphs" stroke="#000" stroke-width="0.22">ФОач. поф</text>
<rect x="820.6" y="623.05" width="10.100000000000023" height="1.0" fill="#000" />
<rect x="820.6" y="626.55" width="10.100000000000023" height="1.0" fill="#000" />
<rect x="836.1" y="625" width="46.7" height="1" fill="#000" />
<text x="856" y="621.3" font-family="Liberation Serif" font-size="9.2" fill="#000" textLength="7" lengthAdjust="spacingAndGlyphs" font-style="italic" stroke="#000" stroke-width="0.18">Q</text>
<text x="836.1" y="637.8" font-family="Liberation Serif" font-size="9.2" fill="#000" textLength="46.2" lengthAdjust="spacingAndGlyphs" stroke="#000" stroke-width="0.18">ССАЧопф</text>
<rect x="883.4" y="623.05" width="10.899999999999977" height="1.0" fill="#000" />
<rect x="883.4" y="626.55" width="10.899999999999977" height="1.0" fill="#000" />
<rect x="894.7" y="625" width="32.6" height="1" fill="#000" />
<text x="894.7" y="620.8" font-family="Liberation Serif" font-size="9.2" fill="#000" textLength="32.6" lengthAdjust="spacingAndGlyphs" stroke="#000" stroke-width="0.18">87364</text>
<text x="898" y="637.8" font-family="Liberation Serif" font-size="9.2" fill="#000" textLength="25" lengthAdjust="spacingAndGlyphs" stroke="#000" stroke-width="0.18">9893</text>
<rect x="928.6" y="623.05" width="10.0" height="1.0" fill="#000" />
<rect x="928.6" y="626.55" width="10.0" height="1.0" fill="#000" />
<text x="939.6" y="630.5" font-family="Liberation Serif" font-size="16" fill="#000" textLength="28.3" lengthAdjust="spacingAndGlyphs" stroke="#000" stroke-width="0.22">8,83</text>
<text x="545.9" y="692.3" font-family="Liberation Serif" font-size="19.5" fill="#000" textLength="101" lengthAdjust="spacingAndGlyphs" stroke="#000" stroke-width="0.22">ФОак. ч. опф</text>
<rect x="653.3" y="683.8" width="12.400000000000091" height="1.3" fill="#000" />
<rect x="653.3" y="689.4" width="12.400000000000091" height="1.3" fill="#000" />
<rect x="803.3" y="683.8" width="12.700000000000045" height="1.3" fill="#000" />
<rect x="803.3" y="689.4" width="12.700000000000045" height="1.3" fill="#000" />
<rect x="869.3" y="683.8" width="12.400000000000091" height="1.3" fill="#000" />
<rect x="869.3" y="689.4" width="12.400000000000091" height="1.3" fill="#000" />
<rect x="672" y="686" width="126" height="1" fill="#000" />
<text x="672.2" y="677.5" font-family="Liberation Serif" font-size="19.5" fill="#000" textLength="51.5" lengthAdjust="spacingAndGlyphs" stroke="#000" stroke-width="0.22">87364</text>
<rect x="727" y="671.8" width="15.8" height="1.3" fill="#000" />
<text x="746.1" y="677.5" font-family="Liberation Serif" font-size="19.5" fill="#000" textLength="52" lengthAdjust="spacingAndGlyphs" stroke="#000" stroke-width="0.22">86234</text>
<text x="682.5" y="704.6" font-family="Liberation Serif" font-size="19.5" fill="#000" textLength="41" lengthAdjust="spacingAndGlyphs" stroke="#000" stroke-width="0.22">9893</text>
<rect x="727" y="698.3" width="15.8" height="1.2" fill="#000" />
<text x="746.1" y="704.6" font-family="Liberation Serif" font-size="19.5" fill="#000" textLength="41.7" lengthAdjust="spacingAndGlyphs" stroke="#000" stroke-width="0.22">8654</text>
<rect x="821.8" y="686" width="41" height="1" fill="#000" />
<text x="822.6" y="677.5" font-family="Liberation Serif" font-size="19.5" fill="#000" textLength="40.5" lengthAdjust="spacingAndGlyphs" stroke="#000" stroke-width="0.22">1130</text>
<text x="823.2" y="704.6" font-family="Liberation Serif" font-size="19.5" fill="#000" textLength="40" lengthAdjust="spacingAndGlyphs" stroke="#000" stroke-width="0.22">1239</text>
<text x="887" y="692.3" font-family="Liberation Serif" font-size="19.5" fill="#000" textLength="35" lengthAdjust="spacingAndGlyphs" stroke="#000" stroke-width="0.22">0,91</text>
<rect x="0" y="706" width="1366" height="22" fill="#f0f0f0" />
<line x1="0" y1="706.5" x2="1366" y2="706.5" stroke="#c4c4c4" stroke-width="1" />
<text x="7.7" y="720.5" font-family="Liberation Sans" font-size="11.5" fill="#444" textLength="84" lengthAdjust="spacingAndGlyphs"  stroke="#444" stroke-width="0.18">Страница 7 из 9</text>
<text x="111.7" y="720.5" font-family="Liberation Sans" font-size="11.5" fill="#444" textLength="82" lengthAdjust="spacingAndGlyphs"  stroke="#444" stroke-width="0.18">Число слов: 828</text>
<path d="M214.5 710.5 V721.5 H220.5 L221.5 722.5 V711.5 C 219.5 710.5, 216.5 710.5, 214.5 710.5 Z" fill="none" stroke="#555" stroke-width="1" />
<text x="222.5" y="717" font-family="Liberation Sans" font-size="8" fill="#555" font-weight="bold"  stroke="#555" stroke-width="0.18">x</text>
<line x1="222" y1="719.5" x2="228" y2="719.5" stroke="#555" stroke-width="1" />
<text x="245.7" y="720.5" font-family="Liberation Sans" font-size="11.5" fill="#444" textLength="41" lengthAdjust="spacingAndGlyphs"  stroke="#444" stroke-width="0.18">русский</text>
<path d="M1086.5 711.5 C 1089 710.5, 1091 710.5, 1092.5 711.5 C 1094 710.5, 1096 710.5, 1098.5 711.5 V721.5 C 1096 720.5, 1094 720.5, 1092.5 721.5 C 1091 720.5, 1089 720.5, 1086.5 721.5 Z" fill="none" stroke="#555" stroke-width="1" />
<line x1="1092.5" y1="711.5" x2="1092.5" y2="722.5" stroke="#555" stroke-width="1" />
<line x1="1088" y1="714" x2="1091" y2="714" stroke="#555" stroke-width="1" />
<line x1="1094" y1="714" x2="1097" y2="714" stroke="#555" stroke-width="1" />
<line x1="1088" y1="716.5" x2="1091" y2="716.5" stroke="#555" stroke-width="1" />
<line x1="1094" y1="716.5" x2="1097" y2="716.5" stroke="#555" stroke-width="1" />
<line x1="1088" y1="719" x2="1091" y2="719" stroke="#555" stroke-width="1" />
<line x1="1094" y1="719" x2="1097" y2="719" stroke="#555" stroke-width="1" />
<rect x="1112.5" y="707" width="37.5" height="20" fill="#c8c8c8" />
<rect x="1124.5" y="710.5" width="13" height="12" fill="none" stroke="#555" stroke-width="1" />
<line x1="1126.5" y1="713.5" x2="1135.5" y2="713.5" stroke="#555" stroke-width="1" />
<line x1="1126.5" y1="716" x2="1135.5" y2="716" stroke="#555" stroke-width="1" />
<line x1="1126.5" y1="718.5" x2="1135.5" y2="718.5" stroke="#555" stroke-width="1" />
<line x1="1126.5" y1="721" x2="1135.5" y2="721" stroke="#555" stroke-width="1" />
<rect x="1162.5" y="710.5" width="10" height="11" fill="#f3f3f3" stroke="#555" stroke-width="1" />
<line x1="1164.5" y1="713.5" x2="1170.5" y2="713.5" stroke="#555" stroke-width="1" />
<line x1="1164.5" y1="716" x2="1170.5" y2="716" stroke="#555" stroke-width="1" />
<line x1="1164.5" y1="718.5" x2="1170.5" y2="718.5" stroke="#555" stroke-width="1" />
<circle cx="1172.5" cy="719.5" r="3.5" fill="#555" />
<path d="M1170 718 L1174 721" fill="none" stroke="#f3f3f3" stroke-width="1" />
<line x1="1193" y1="716.5" x2="1199" y2="716.5" stroke="#555" stroke-width="2" />
<line x1="1203.4" y1="716.5" x2="1303.2" y2="716.5" stroke="#a6a6a6" stroke-width="1" />
<rect x="1251.5" y="711.5" width="4" height="10.5" fill="#555" />
<path d="M1307.5 716.5 H1315 M1311.25 712.75 V720.25" fill="none" stroke="#555" stroke-width="2" />
<text x="1330.8" y="721" font-family="Liberation Sans" font-size="11.5" fill="#444" textLength="26" lengthAdjust="spacingAndGlyphs"  stroke="#444" stroke-width="0.18">100%</text>
<rect x="946" y="696" width="131" height="19.5" fill="#000" opacity="0.06"/>
<rect x="944.5" y="694.5" width="131" height="19.5" fill="#fff" stroke="#b6b6b6" stroke-width="1" />
<text x="947.6" y="708.1" font-family="Liberation Sans" font-size="11.5" fill="#575757" textLength="124.7" lengthAdjust="spacingAndGlyphs"  stroke="#575757" stroke-width="0.18">Параметры уравнений</text>
<rect x="0" y="728" width="1366" height="40" fill="#0a0a0a" />
<rect x="343" y="728" width="48" height="40" fill="#3b3b3b" />
<rect x="387" y="728" width="4" height="40" fill="#4a4a4a" />
<rect x="298" y="766" width="39" height="2" fill="#e68bc3" />
<rect x="343" y="766" width="44" height="2" fill="#e68bc3" />
<rect x="396" y="766" width="32" height="2" fill="#e68bc3" />
<rect x="428" y="766" width="8" height="2" fill="#b66b9a" />
<path d="M16 741 L23 740 V747 H16 Z M24 739.8 L32 738.6 V747 H24 Z M16 748 H23 V756 L16 755 Z M24 748 H32 V757.4 L24 756.2 Z" fill="#fff" />
<circle cx="72.8" cy="745.5" r="6.6" fill="none" stroke="#fff" stroke-width="1.3" />
<line x1="68" y1="750.5" x2="64" y2="755.5" stroke="#fff" stroke-width="1.5" />
<path d="M112.5 740 V741.5 H123.5 V740 M112.5 755 V753.5 H123.5 V755" fill="none" stroke="#fff" stroke-width="1" />
<rect x="112.5" y="744.5" width="11" height="6" fill="none" stroke="#fff" stroke-width="1.2" />
<path d="M126.5 740 V742.5 M126.5 744 V755" fill="none" stroke="#fff" stroke-width="1.2" />
<path d="M164.5 743 C 164.5 736, 176.5 736, 176.5 743" fill="none" stroke="#eee" stroke-width="1.5" />
<rect x="159" y="742" width="23.5" height="17" fill="#f4f4f4" />
<rect x="165" y="746" width="5" height="5" fill="#f25022" />
<rect x="171" y="746" width="5" height="5" fill="#7fba00" />
<rect x="165" y="752" width="5" height="5" fill="#00a4ef" />
<rect x="171" y="752" width="5" height="5" fill="#ffb900" />
<path d="M208 745 L220 737 L232 745 V759 H208 Z" fill="#1f7fd8" />
<path d="M208 745 L220 753 L232 745 V759 H208 Z" fill="#3aa0f0" />
<path d="M210 744 H230 L220 751 Z" fill="#e8f2fc" />
<path d="M260.5 749 H278.5 C 279 741, 274 737.5, 269 737.5 C 263 737.5, 259 742, 259 748.5 C 259 755, 264 759, 270 759 C 273.5 759, 276.5 758, 278.5 756.5 V751.5 C 276.5 753.5, 273.5 754.5, 271 754.5 C 267.5 754.5, 265 752.5, 265 749 Z M265.2 745.5 C 265.5 743, 267.5 741.5, 269.5 741.5 C 271.5 741.5, 273.5 743, 273.5 745.5 Z" fill="#1e78d7" fill-rule="evenodd"/>
<circle cx="318" cy="747.8" r="11" fill="#f2f2f2" />
<path d="M312.5 741 L318 748.5 L323.5 741 M318 748.5 V755" fill="none" stroke="#d71e28" stroke-width="2.4" />
<path d="M356 738.5 L369 736.5 V759 L356 757 Z" fill="#2b5ba8" />
<rect x="369" y="739" width="8.5" height="17" fill="#fff" />
<rect x="370" y="741.5" width="6.5" height="1" fill="#1f3e74" />
<rect x="370" y="744" width="6.5" height="1" fill="#1f3e74" />
<rect x="370" y="746.5" width="6.5" height="1" fill="#1f3e74" />
<rect x="370" y="749" width="6.5" height="1" fill="#1f3e74" />
<rect x="370" y="751.5" width="6.5" height="1" fill="#1f3e74" />
<rect x="370" y="754" width="6.5" height="1" fill="#1f3e74" />
<text x="357.2" y="751.5" font-family="Liberation Sans" font-size="9" fill="#fff" textLength="10" lengthAdjust="spacingAndGlyphs" font-weight="bold"  stroke="#fff" stroke-width="0.18">W</text>
<path d="M405 740 H412 L414 742 H427 V756.5 H405 Z" fill="#f8d775" />
<rect x="405" y="744" width="22" height="1" fill="#e8b84a" />
<rect x="409" y="750" width="13" height="6.5" fill="#3d9ae0" />
<rect x="413" y="753" width="5" height="3.5" fill="#f8d775" />
<rect x="454" y="740" width="20.5" height="18" fill="#6fb2e6" />
<rect x="470" y="740" width="4.5" height="18" fill="#b9dcf5" />
<circle cx="463" cy="749" r="7" fill="#f08a24" />
<path d="M460.5 745 L467.5 749 L460.5 753 Z" fill="#fff" />
<path d="M502.5 737 H519 L525 748 L519 759 H502.5 Z" fill="#f3f3f3" />
<text x="505.5" y="756" font-family="Liberation Serif" font-size="17" fill="#d52b2b" >Я</text>
<circle cx="1086.5" cy="748.5" r="2.5" fill="none" stroke="#fff" stroke-width="1.1" />
<circle cx="1093.5" cy="743.5" r="2.8" fill="none" stroke="#fff" stroke-width="1.1" />
<path d="M1083 754.5 C 1083 751.5, 1090 751.5, 1090 754.5 M1089 748 C 1090 746.5, 1098 746.5, 1098 749.5" fill="none" stroke="#fff" stroke-width="1.1" />
<path d="M1121.5 750.5 L1127 745 L1132.5 750.5" fill="none" stroke="#fff" stroke-width="1.3" />
<path d="M1143 744 H1148 M1145 742 V744 M1147 742 V744 M1145.5 744 V748 M1143.5 748 H1148.5" fill="none" stroke="#fff" stroke-width="1.1" />
<rect x="1149.5" y="743.5" width="8" height="7.5" fill="none" stroke="#fff" stroke-width="1" />
<rect x="1150.5" y="744.5" width="5" height="5.5" fill="#fff" />
<rect x="1157.5" y="745.5" width="1.5" height="3.5" fill="#fff" />
<path d="M1167.5 745.5 H1170.5 L1174.5 741.5 V753.5 L1170.5 749.5 H1167.5 Z" fill="none" stroke="#fff" stroke-width="1.1" />
<path d="M1177 744.5 C 1178.5 746.5, 1178.5 748.5, 1177 750.5 M1180 742.5 C 1182.5 745.5, 1182.5 749.5, 1180 752.5" fill="none" stroke="#fff" stroke-width="1.1" />
<path d="M1182.5 741 C 1185.5 745, 1185.5 750, 1182.5 754" fill="none" stroke="#888" stroke-width="1" />
<path d="M1194.5 752 C 1196 744, 1201 742, 1206.5 742 M1197.5 753 C 1198 747, 1201.5 745, 1206.5 745 M1200.5 753.5 C 1201 750, 1203 748, 1206.5 748" fill="none" stroke="#fff" stroke-width="1.2" />
<circle cx="1204.5" cy="752.5" r="1.6" fill="#fff" />
<text x="1218.7" y="752" font-family="Liberation Sans" font-size="11.5" fill="#fff" textLength="20.6" lengthAdjust="spacingAndGlyphs"  stroke="#fff" stroke-width="0.18">РУС</text>
<text x="1266.2" y="743" font-family="Liberation Sans" font-size="11.5" fill="#fff" textLength="27" lengthAdjust="spacingAndGlyphs"  stroke="#fff" stroke-width="0.18">16:43</text>
<text x="1253.9" y="761.3" font-family="Liberation Sans" font-size="11.5" fill="#fff" textLength="52.7" lengthAdjust="spacingAndGlyphs"  stroke="#fff" stroke-width="0.18">15.04.2020</text>
<path d="M1326 741 H1341 V751 H1331 L1328 754 V751 H1326 Z" fill="#fff" />
<line x1="1328.5" y1="744" x2="1338.5" y2="744" stroke="#0c0c0c" stroke-width="1" />
<line x1="1328.5" y1="746.5" x2="1338.5" y2="746.5" stroke="#0c0c0c" stroke-width="1" />
<line x1="1328.5" y1="749" x2="1338.5" y2="749" stroke="#0c0c0c" stroke-width="1" />
<circle cx="1340.2" cy="755.3" r="6.8" fill="#2a2a2a" stroke="#555" stroke-width="1.5" />
<text x="1340.2" y="759.2" font-family="Liberation Sans" font-size="9.5" fill="#fff" font-weight="bold" text-anchor="middle"  stroke="#fff" stroke-width="0.18">1</text>
<line x1="1360.5" y1="728" x2="1360.5" y2="768" stroke="#444" stroke-width="1" /></svg></body></html>
